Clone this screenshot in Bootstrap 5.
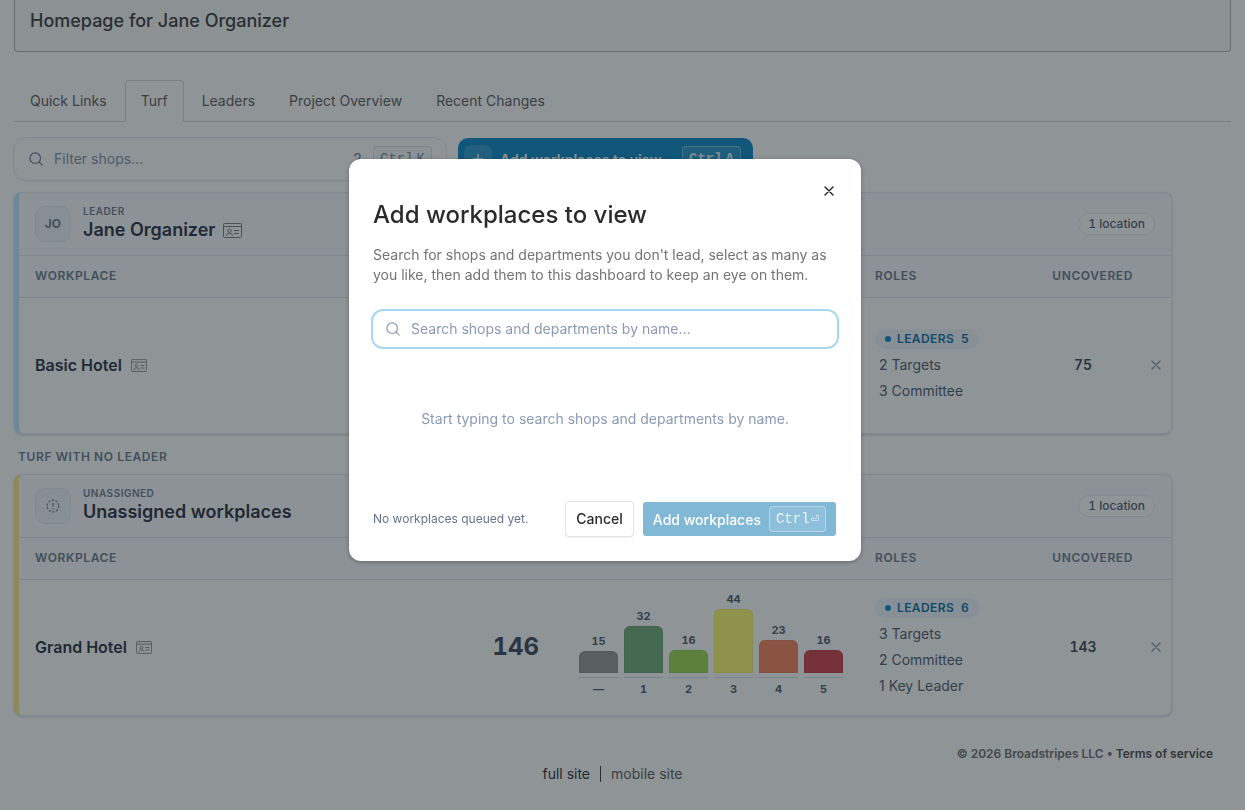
<!DOCTYPE html>
<html lang="en">
<head>
<meta charset="utf-8">
<meta name="viewport" content="width=device-width, initial-scale=1">
<title>Homepage for Jane Organizer</title>
<link href="https://cdn.jsdelivr.net/npm/bootstrap@5.3.0/dist/css/bootstrap.min.css" rel="stylesheet">
<style>
  body { font-family: Inter, "Liberation Sans", sans-serif; font-size: 14px; line-height: 20px; color: #333; background: #fff; }
  a { color: inherit; text-decoration: none; }
  svg { display: block; flex: none; }
  .site { padding: 0 14px; }
  .site-title { border: 1px solid #b0b0b0; border-top: 0; border-radius: 0 0 4px 4px; background: #f8f8f8; height: 52px; padding: 9px 15px; }
  .site-title h1 { font-size: 18px; line-height: 24px; font-weight: 500; color: #333; margin: 0; }
  .nav-tabs { margin-top: 28px; --bs-nav-tabs-border-color: #d4d4d4; gap: 2px; }
  .nav-tabs .nav-link { color: #555; padding: 10px 15px; border-radius: 4px 4px 0 0; line-height: 20px; height: 42px; }
  .nav-tabs .nav-link.active { color: #555; border-color: #d4d4d4 #d4d4d4 #fff; background: #fff; }
  .turf { padding-right: 59px; padding-top: 15px; }
  .filter-row { gap: 11px; margin: 0 0 11px -1px; }
  .filter-box { width: 434px; height: 44px; border: 1px solid #e2e8f0; border-radius: 14px; padding: 0 14px 0 15px; gap: 11px; color: #64748b; box-shadow: 0 1px 2px rgba(15,23,42,.06); }
  .filter-box input, .search-box input { border: 0; outline: 0; background: transparent; flex: 1; min-width: 0; padding: 0; color: #333; }
  .filter-box input::placeholder { color: #7f8ca2; }
  kbd { display: inline-flex; gap: 3px; font-family: "Liberation Mono", monospace; font-size: 14px; line-height: 20px; border-radius: 4px; padding: 2px 6px; border: 1px solid #dbe1e8; background: #f8fafc; color: #7a8798; }
  .btn-view { background: #0284c7; color: #fff; border: 0; border-radius: 10px; height: 42px; width: 295px; padding: 0 12px 0 6px; font-size: 14px; font-weight: 600; }
  .btn-view:hover { background: #0277b3; color: #fff; }
  .plus-box { width: 28px; height: 28px; border-radius: 8px; background: rgba(255,255,255,.15); margin-right: 8px; }
  .btn-view kbd, .btn-queue kbd { background: rgba(255,255,255,.12); border-color: rgba(255,255,255,.35); color: rgba(255,255,255,.85); }
  .btn-queue kbd { gap: 1px; }
  .turf-card { border: 1px solid #e2e8f0; border-left: 5px solid #bae6fd; border-radius: 8px; overflow: hidden; box-shadow: 0 1px 3px rgba(15,23,42,.2); background: #fff; }
  .turf-card.is-open { border-left-color: #fde68a; }
  .turf-head { background: #fafbfc; height: 63px; padding: 0 16px; border-bottom: 1px solid #dfe5ec; }
  .avatar-box { width: 36px; height: 36px; border-radius: 10px; border: 1px solid #e2e8f0; background: #f1f5f9; color: #64748b; font-size: 12px; font-weight: 700; }
  .eyebrow { font-size: 10px; line-height: 12px; font-weight: 600; letter-spacing: .05em; color: #64748b; }
  .turf-name { font-size: 18px; line-height: 26px; font-weight: 600; color: #1e293b; margin: 0; gap: 7px; }
  .turf-name svg, .shop svg { color: #777; }
  .pill { border: 1px solid #e2e8f0; background: #fff; border-radius: 11px; padding: 0 9px; line-height: 20px; font-size: 12px; font-weight: 500; color: #475569; }
  .pill, .total, .bars, .uncovered, .filter-count { font-variant-numeric: tabular-nums; }
  .turf-table { table-layout: fixed; width: 100%; margin: 0; }
  .turf-table th { height: 41px; background: #f8fafb; border-bottom: 1px solid #dfe5ec; padding: 0 16px; font-size: 12px; font-weight: 600; letter-spacing: .05em; color: #64748b; }
  .turf-table td { height: 136px; padding: 0 16px; vertical-align: middle; }
  .w-total { width: 120px; }
  .w-chart { width: 296px; }
  .w-roles { width: 166px; }
  .w-uncovered { width: 116px; }
  .w-remove { width: 30px; }
  .shop { font-size: 16px; font-weight: 600; color: #1e293b; gap: 9px; }
  .total { font-size: 24px; font-weight: 700; color: #334155; }
  .uncovered { font-weight: 600; color: #334155; }
  .bars { gap: 6px; height: 112px; padding-bottom: 6px; }
  .bar-col { width: 39px; font-size: 11px; line-height: 16px; font-weight: 700; color: #475569; text-align: center; }
  .bar-fill { border-radius: 6px 6px 0 0; margin-top: 2px; margin-bottom: 4px; box-shadow: inset 0 0 0 1px rgba(15,23,42,.06); }
  .bar-label { border-top: 1px solid #d4dbe4; padding-top: 3px; }
  .roles { color: #475569; }
  .roles li { display: flex; align-items: center; height: 26px; padding-left: 4px; }
  .role-chip { display: inline-flex; align-items: center; gap: 6px; height: 20px; padding: 0 10px; border-radius: 10px; background: #edf6fc; color: #0369a1; font-size: 12px; line-height: 20px; font-weight: 600; letter-spacing: .4px; }
  .dot { width: 6px; height: 6px; border-radius: 50%; background: #0284c7; }
  .icon-btn { border: 0; background: transparent; padding: 0; color: #8592a6; }
  .section-label { font-size: 12px; line-height: 20px; font-weight: 600; letter-spacing: .05em; color: #64748b; margin: 13px 0 7px 4px; }
  .legal { font-size: 12px; font-weight: 600; color: #666; padding: 28px 18px 0 0; }
  .legal a { color: #444; }
  .site-switch { gap: 10px; padding-right: 20px; color: #555; }
  .site-switch .vr { width: 1px; height: 16px; color: #333; opacity: 1; }
  .modal-backdrop { --bs-backdrop-bg: #20292f; --bs-backdrop-opacity: .5; }
  .modal { padding-right: 35px; }
  .modal-dialog { max-width: 512px; margin-top: 159px; }
  .modal-content { border: 0; border-radius: 12px; padding: 24px; box-shadow: 0 1px 4px rgba(0,0,0,.3); }
  .modal-title { font-size: 24px; line-height: 32px; font-weight: 500; color: #2b2b2b; }
  .close-btn { color: #222; margin-right: 3px; height: 16px; }
  .modal-lead { color: #737373; margin: 14px 0 24px; }
  .search-box { height: 40px; margin: 0 -2px; border: 2px solid #a5d8f0; border-radius: 12px; padding: 0 13px; gap: 11px; color: #8a99b3; }
  .search-box input::placeholder { color: #8a9ab5; }
  .empty-note { color: #8a9ab5; padding: 60px 0 72px; }
  .queue-note { font-size: 12px; color: #64748b; }
  .dialog-actions { gap: 9px; padding-right: 1px; }
  .btn-cancel { height: 36px; padding: 0 10px 2px; border: 1px solid #e2e2e2; border-radius: 4px; font-size: 14px; font-weight: 500; color: #2b2b2b; background: #fff; box-shadow: 0 1px 2px rgba(0,0,0,.05); }
  .btn-queue, .btn-queue:disabled { height: 34px; padding: 0 10px; border: 0; border-radius: 3px; font-size: 14px; font-weight: 500; color: #fff; background: #80b8d6; opacity: 1; gap: 8px; }
</style>
</head>
<body>
<svg width="0" height="0" class="position-absolute" aria-hidden="true">
  <symbol id="i-card" viewBox="0 0 19 15"><g fill="none" stroke="currentColor" stroke-width="1"><rect x=".5" y=".5" width="18" height="14" rx="1"/><path d="M1 3.500h17M11 7.500h5M11 10.500h5M3.500 13v-.5a3 2.200 0 0 1 6 0v.5"/><circle cx="6.500" cy="7.700" r="1.700"/></g></symbol>
  <symbol id="i-search" viewBox="0 0 14 14"><g fill="none" stroke="currentColor" stroke-width="1.200" stroke-linecap="round"><circle cx="6.200" cy="6.200" r="5.300"/><path d="M10.200 10.200l3 3"/></g></symbol>
  <symbol id="i-x" viewBox="0 0 10 10"><path d="M1 1l8 8M9 1l-8 8" fill="none" stroke="currentColor" stroke-width="1.400" stroke-linecap="round"/></symbol>
</svg>

<div class="site">
  <header class="site-title"><h1>Homepage for Jane Organizer</h1></header>

  <ul class="nav nav-tabs">
    <li class="nav-item"><a class="nav-link" href="#">Quick Links</a></li>
    <li class="nav-item"><a class="nav-link active" aria-current="page" href="#">Turf</a></li>
    <li class="nav-item"><a class="nav-link" href="#">Leaders</a></li>
    <li class="nav-item"><a class="nav-link" href="#">Project Overview</a></li>
    <li class="nav-item"><a class="nav-link" href="#">Recent Changes</a></li>
  </ul>

  <main class="turf">
    <div class="filter-row d-flex align-items-center">
      <div class="filter-box d-flex align-items-center">
        <svg width="14" height="14"><use href="#i-search"/></svg>
        <input type="search" aria-label="Filter shops" placeholder="Filter shops...">
        <span class="filter-count">2</span>
        <kbd><span>Ctrl</span><span>K</span></kbd>
      </div>
      <button type="button" class="btn btn-view d-flex align-items-center">
        <span class="plus-box d-flex align-items-center justify-content-center"><svg width="12" height="12" viewBox="0 0 12 12"><path d="M6 1v10M1 6h10" stroke="currentColor" stroke-width="1.300"/></svg></span>
        Add workplaces to view
        <kbd class="ms-auto"><span>Ctrl</span><span>A</span></kbd>
      </button>
    </div>

    <section class="turf-card">
      <div class="turf-head d-flex align-items-center">
        <div class="avatar-box d-flex align-items-center justify-content-center">JO</div>
        <div class="ms-2 ps-1">
          <div class="eyebrow">LEADER</div>
          <h2 class="turf-name d-flex align-items-center"><a href="#">Jane Organizer</a><svg width="19" height="15"><use href="#i-card"/></svg></h2>
        </div>
        <span class="pill ms-auto">1 location</span>
      </div>
      <table class="turf-table">
        <colgroup><col><col class="w-total"><col class="w-chart"><col class="w-roles"><col class="w-uncovered"><col class="w-remove"></colgroup>
        <thead><tr><th>WORKPLACE</th><th></th><th></th><th>ROLES</th><th class="text-end px-2">UNCOVERED</th><th></th></tr></thead>
        <tbody><tr>
          <td><div class="shop d-flex align-items-center"><a href="#">Basic Hotel</a><svg width="16" height="13"><use href="#i-card"/></svg></div></td>
          <td></td><td></td>
          <td><ul class="roles list-unstyled mb-0"><li class="ps-0"><span class="role-chip"><span class="dot"></span>LEADERS&nbsp; 5</span></li><li>2 Targets</li><li>3 Committee</li></ul></td>
          <td class="uncovered text-center">75</td>
          <td class="px-0"><button type="button" class="icon-btn d-block mx-auto" aria-label="Remove Basic Hotel"><svg width="10" height="10"><use href="#i-x"/></svg></button></td>
        </tr></tbody>
      </table>
    </section>

    <h3 class="section-label">TURF WITH NO LEADER</h3>

    <section class="turf-card is-open">
      <div class="turf-head d-flex align-items-center">
        <div class="avatar-box d-flex align-items-center justify-content-center"><svg width="14" height="14" viewBox="0 0 14 14"><circle cx="7" cy="7" r="5.800" fill="none" stroke="currentColor" stroke-width="1.200" stroke-dasharray="2.200 1.440"/><path d="M7 4v3.500M7 9v1.200" stroke="currentColor" stroke-width="1.200"/></svg></div>
        <div class="ms-2 ps-1">
          <div class="eyebrow">UNASSIGNED</div>
          <h2 class="turf-name">Unassigned workplaces</h2>
        </div>
        <span class="pill ms-auto">1 location</span>
      </div>
      <table class="turf-table">
        <colgroup><col><col class="w-total"><col class="w-chart"><col class="w-roles"><col class="w-uncovered"><col class="w-remove"></colgroup>
        <thead><tr><th>WORKPLACE</th><th></th><th></th><th>ROLES</th><th class="text-end px-2">UNCOVERED</th><th></th></tr></thead>
        <tbody><tr>
          <td><div class="shop d-flex align-items-center"><a href="#">Grand Hotel</a><svg width="16" height="13"><use href="#i-card"/></svg></div></td>
          <td class="total text-end pe-4">146</td>
          <td><div class="bars d-flex align-items-end">
            <div class="bar-col">15<div class="bar-fill" style="height:22px;background:#929292"></div><div class="bar-label">—</div></div>
            <div class="bar-col">32<div class="bar-fill" style="height:47px;background:#6ba873"></div><div class="bar-label">1</div></div>
            <div class="bar-col">16<div class="bar-fill" style="height:23px;background:#9ad64b"></div><div class="bar-label">2</div></div>
            <div class="bar-col">44<div class="bar-fill" style="height:64px;background:#fffb66"></div><div class="bar-label">3</div></div>
            <div class="bar-col">23<div class="bar-fill" style="height:33px;background:#f57f55"></div><div class="bar-label">4</div></div>
            <div class="bar-col">16<div class="bar-fill" style="height:23px;background:#cc3a40"></div><div class="bar-label">5</div></div>
          </div></td>
          <td><ul class="roles list-unstyled mb-0"><li class="ps-0"><span class="role-chip"><span class="dot"></span>LEADERS&nbsp; 6</span></li><li>3 Targets</li><li>2 Committee</li><li>1 Key Leader</li></ul></td>
          <td class="uncovered text-center">143</td>
          <td class="px-0"><button type="button" class="icon-btn d-block mx-auto" aria-label="Remove Grand Hotel"><svg width="10" height="10"><use href="#i-x"/></svg></button></td>
        </tr></tbody>
      </table>
    </section>
  </main>

  <footer>
    <div class="legal text-end">© 2026 Broadstripes LLC • <a href="#">Terms of service</a></div>
    <div class="site-switch d-flex justify-content-center align-items-center"><a href="#" class="text-dark">full site</a><span class="vr align-self-center"></span><a href="#">mobile site</a></div>
  </footer>
</div>

<div class="modal-backdrop show"></div>
<div class="modal show d-block" tabindex="-1" role="dialog" aria-modal="true" aria-labelledby="dlg-title">
  <div class="modal-dialog">
    <div class="modal-content">
      <div class="d-flex justify-content-end"><button type="button" class="icon-btn close-btn" aria-label="Close"><svg width="10" height="10"><use href="#i-x"/></svg></button></div>
      <h2 class="modal-title" id="dlg-title">Add workplaces to view</h2>
      <p class="modal-lead">Search for shops and departments you don't lead, select as many as you like, then add them to this dashboard to keep an eye on them.</p>
      <div class="search-box d-flex align-items-center">
        <svg width="14" height="14"><use href="#i-search"/></svg>
        <input type="search" aria-label="Search shops and departments" placeholder="Search shops and departments by name...">
      </div>
      <div class="empty-note text-center">Start typing to search shops and departments by name.</div>
      <div class="dialog-actions d-flex align-items-center">
        <span class="queue-note me-auto">No workplaces queued yet.</span>
        <button type="button" class="btn btn-cancel">Cancel</button>
        <button type="button" class="btn btn-queue d-flex align-items-center" disabled>Add workplaces <kbd><span>Ctrl</span><span>⏎</span></kbd></button>
      </div>
    </div>
  </div>
</div>
<script src="https://cdn.jsdelivr.net/npm/bootstrap@5.3.0/dist/js/bootstrap.bundle.min.js"></script>
</body>
</html>
